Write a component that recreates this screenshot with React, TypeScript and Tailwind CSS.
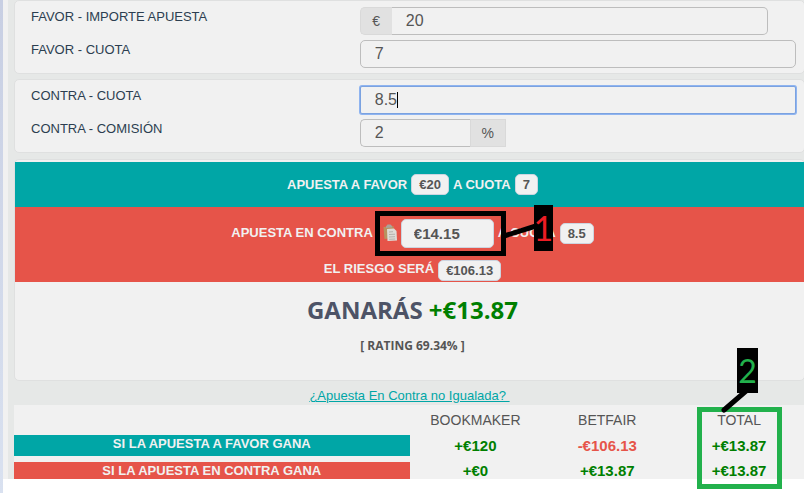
import { useState } from 'react';
import type { ReactNode } from 'react';

const results = [
  {
    label: 'SI LA APUESTA A FAVOR GANA',
    labelClass: 'bg-[#00a6a6] pb-1',
    cellClass: 'pb-1.5',
    values: ['+€120', '-€106.13', '+€13.87'],
  },
  {
    label: 'SI LA APUESTA EN CONTRA GANA',
    labelClass: 'bg-[#e65449]',
    cellClass: '',
    values: ['+€0', '+€13.87', '+€13.87'],
  },
];

const inputClass =
  'min-w-0 border border-[#bdbdbd] bg-[#f1f1f1] px-3.5 text-base text-[#555] outline-none';

function Field({ id, label, className = 'pr-2', children }: { id: string; label: string; className?: string; children: ReactNode }) {
  return (
    <div className="grid grid-cols-12">
      <label htmlFor={id} className="col-span-5 pl-4 text-[13px] leading-5 text-[#2c3e50]">
        {label}
      </label>
      <div className={`col-span-7 flex h-7 pl-4 ${className}`}>{children}</div>
    </div>
  );
}

function Badge({ children }: { children: ReactNode }) {
  return (
    <span className="rounded-[5px] border border-[#cdd5e0] bg-[#f1f1f1] px-[7px] leading-[19px] text-[#555]">
      {children}
    </span>
  );
}

function ClipboardIcon() {
  return (
    <svg width="14" height="18" viewBox="0 0 14 18" aria-hidden="true">
      <path d="M0.500 3l10-1 1 12-10 1z" fill="#b8925f" />
      <path d="M3 2.500l1.500-2h3l1.500 1.500v1.500l-6 .5z" fill="#a9a49c" />
      <path d="M4 5l7-.5 2.500 2.500.5 9.500-9.500.5z" fill="#dedbd7" />
      <path d="M6 8l4-.3M6 10.500l6-.3M6 13l6-.3M6.200 15.300l6-.3" stroke="#b5b1ad" />
    </svg>
  );
}

export default function App() {
  const [stake, setStake] = useState('20');
  const [backOdds, setBackOdds] = useState('7');
  const [layOdds, setLayOdds] = useState('8.5');
  const [commission, setCommission] = useState('2');

  return (
    <div className="flex min-h-screen items-start overflow-hidden bg-white font-['Liberation_Sans',Arial,sans-serif]">
      <div className="w-[3px] shrink-0 self-stretch bg-linear-to-b from-[#c8cfe3] to-[#d9e1f0]" />
      <main className="-mr-px min-w-0 flex-1 border-l-[5px] border-[#f1f1f1] bg-[#e6e8e7] pl-1.5">
        {/* Back bet */}
        <section className="flex flex-col gap-[5px] rounded-[5px] border border-[#dfe0e0] bg-[#f1f1f1] pt-1.5 pb-[5px]">
          <Field id="stake" label="FAVOR - IMPORTE APUESTA" className="pr-9">
            <span className="flex w-8 items-center justify-center rounded-l-[5px] border border-r-0 border-[#d9d9d9] bg-[#e1e1e1] text-sm text-[#555]">
              €
            </span>
            <input id="stake" value={stake} onChange={(e) => setStake(e.target.value)} className={`${inputClass} flex-1 rounded-r-[5px] border-l-0`} />
          </Field>
          <Field id="back-odds" label="FAVOR - CUOTA">
            <input id="back-odds" value={backOdds} onChange={(e) => setBackOdds(e.target.value)} className={`${inputClass} flex-1 rounded-[5px]`} />
          </Field>
        </section>

        {/* Lay bet */}
        <section className="mt-[5px] flex flex-col gap-[5px] rounded-[5px] border border-[#dfe0e0] bg-[#f1f1f1] pt-1.5 pb-[5px]">
          <Field id="lay-odds" label="CONTRA - CUOTA">
            <div className="relative flex flex-1">
              <input
                id="lay-odds"
                value={layOdds}
                onChange={(e) => setLayOdds(e.target.value)}
                className="min-w-0 flex-1 rounded-xs border border-[#7ba2e0] bg-[#f1f1f1] px-3.5 text-base text-[#555] ring-1 ring-[#8fb4f0] outline-none"
              />
              <span className="absolute top-1.5 left-[37px] h-4 w-px bg-black" />
            </div>
          </Field>
          <Field id="commission" label="CONTRA - COMISIÓN">
            <input id="commission" value={commission} onChange={(e) => setCommission(e.target.value)} className={`${inputClass} w-[110px] rounded-l-[5px] border-r-0`} />
            <span className="flex w-9 items-center justify-center border border-[#d9d9d9] bg-[#e1e1e1] text-sm text-[#555]">
              %
            </span>
          </Field>
        </section>

        {/* Summary */}
        <section className="mt-1.5 rounded-[5px] border border-[#dfe0e0] bg-[#f1f1f1] pt-0.5 pb-6 text-[13px] font-bold">
          <div className="flex h-[45px] items-center justify-center gap-1 bg-[#00a6a6] pl-1.5 text-[#f1f1f1]">
            APUESTA A FAVOR <Badge>€20</Badge> A CUOTA <Badge>7</Badge>
          </div>
          <div className="bg-[#e65449] pt-2.5 pb-px pl-1.5 text-[#f1f1f1]">
            <div className="flex h-8 items-center justify-center gap-1">
              APUESTA EN CONTRA
              <div className="relative flex items-center gap-1 pl-1.5">
                <button type="button" aria-label="Copiar">
                  <ClipboardIcon />
                </button>
                <input
                  aria-label="Importe en contra"
                  readOnly
                  value="€14.15"
                  className="h-[29px] w-[93px] rounded-[5px] border border-[#cdd5e0] bg-[#f1f1f1] px-3 text-[15px] text-[#555] outline-none"
                />
                {/* Callout 1 */}
                <div className="absolute -inset-y-2 -right-3 -left-0.5 border-5 border-black" />
                <svg className="absolute top-0 left-full" width="44" height="28" viewBox="0 0 44 28" aria-hidden="true">
                  <path d="M10 17L42 7" stroke="#000" strokeWidth="5" />
                </svg>
                <span className="absolute -top-3.5 left-full ml-10 flex h-[46px] w-[19px] items-center justify-center bg-black font-['Lato',sans-serif] text-[34px] font-normal text-[#ed1c24]">
                  1
                </span>
              </div>
              A CUOTA <Badge>8.5</Badge>
            </div>
            <div className="flex h-8 items-end justify-center gap-1">
              <span className="leading-6">EL RIESGO SERÁ</span> <Badge>€106.13</Badge>
            </div>
          </div>
          <div className="pt-3 pl-1.5 text-center font-['Open_Sans',sans-serif] text-[#4d5366]">
            <h2 className="text-2xl">
              GANARÁS <span className="text-[#007f00]">+€13.87</span>
            </h2>
            <p className="mt-2.5 text-xs leading-5 text-[#555]">[ RATING 69.34% ]</p>
          </div>
        </section>

        <div className="flex h-6 items-center justify-center pt-2.5 pb-1 text-[13px]">
          <a href="#no-igualada" className="whitespace-pre text-[#00a6a6] underline">
            ¿Apuesta En Contra no Igualada?{' '}
          </a>
        </div>

        {/* Results */}
        <div className="relative">
          <table className="w-full table-fixed bg-[#f1f1f1] text-center">
            <thead>
              <tr className="h-[30px] text-sm text-[#555]">
                <th className="w-1/2" />
                <th className="font-normal">BOOKMAKER</th>
                <th className="font-normal">BETFAIR</th>
                <th className="font-normal">TOTAL</th>
              </tr>
            </thead>
            <tbody className="font-bold">
              {results.map((row) => (
                <tr key={row.label}>
                  <th className={`p-0 ${row.cellClass}`}>
                    <div className={`text-[13px] leading-[17px] text-[#f1f1f1] ${row.labelClass}`}>{row.label}</div>
                  </th>
                  {row.values.map((value, i) => (
                    <td key={i} className={`p-0 text-[15px] leading-[17px] ${row.cellClass} ${value.startsWith('-') ? 'text-[#e65449]' : 'text-[#007f00]'}`}>
                      {value}
                    </td>
                  ))}
                </tr>
              ))}
            </tbody>
          </table>
          {/* Callout 2 */}
          <div className="absolute top-0.5 right-[23px] h-[82px] w-[85px] border-5 border-[#22b14c]" />
          <svg className="absolute -top-4 right-14" width="28" height="26" viewBox="0 0 28 26" aria-hidden="true">
            <path d="M3 21L25 2" stroke="#000" strokeWidth="5" strokeLinecap="round" />
          </svg>
          <span className="absolute -top-[57px] right-[47px] flex h-[45px] w-[21px] items-center justify-center bg-black font-['Lato',sans-serif] text-[32px] text-[#22b14c]">
            2
          </span>
        </div>
      </main>
    </div>
  );
}
